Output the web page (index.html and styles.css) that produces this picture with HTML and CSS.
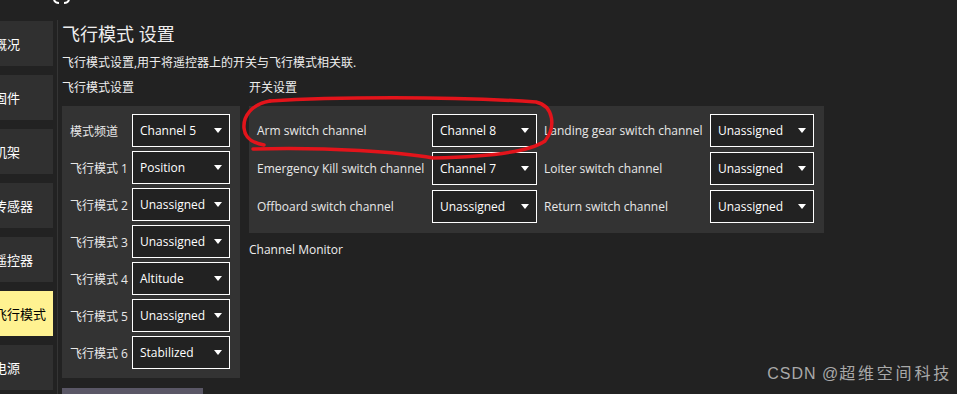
FILE: index.html
```html
<!DOCTYPE html>
<html lang="zh-CN">
<head>
  <meta charset="UTF-8" />
  <title>飞行模式 设置</title>
  <link rel="stylesheet" href="styles.css">
</head>
<body>
  <div class="topbar">
    <svg width="18" height="4" viewBox="0 0 18 4">
      <path d="M1 0 Q2 3 6 3" stroke="#fff" stroke-width="2" fill="none"/>
      <path d="M11 3 Q15 3 16 0" stroke="#fff" stroke-width="2" fill="none"/>
    </svg>
  </div>

  <div class="main">
    <div class="sidebar">
      <div class="sidebtn">概况</div>
      <div class="sidebtn">固件</div>
      <div class="sidebtn">机架</div>
      <div class="sidebtn">传感器</div>
      <div class="sidebtn">遥控器</div>
      <div class="sidebtn active">飞行模式</div>
      <div class="sidebtn">电源</div>
    </div>

    <div class="divider"></div>

    <div class="content">
      <h1 class="page-title">飞行模式 设置</h1>
      <p class="page-desc">飞行模式设置,用于将遥控器上的开关与飞行模式相关联.</p>

      <div class="columns">
        <div class="col-left">
          <div class="col-head">飞行模式设置</div>
          <div class="panel modes">
            <span class="label">模式频道</span>
            <div class="select">Channel 5<i class="arrow"></i></div>
            <span class="label">飞行模式 1</span>
            <div class="select">Position<i class="arrow"></i></div>
            <span class="label">飞行模式 2</span>
            <div class="select">Unassigned<i class="arrow"></i></div>
            <span class="label">飞行模式 3</span>
            <div class="select">Unassigned<i class="arrow"></i></div>
            <span class="label">飞行模式 4</span>
            <div class="select">Altitude<i class="arrow"></i></div>
            <span class="label">飞行模式 5</span>
            <div class="select">Unassigned<i class="arrow"></i></div>
            <span class="label">飞行模式 6</span>
            <div class="select">Stabilized<i class="arrow"></i></div>
          </div>
          <div class="bottom-bar"></div>
        </div>

        <div class="col-right">
          <div class="col-head">开关设置</div>
          <div class="panel switches">
            <span class="label">Arm switch channel</span>
            <div class="select">Channel 8<i class="arrow"></i></div>
            <span class="label">Landing gear switch channel</span>
            <div class="select">Unassigned<i class="arrow"></i></div>

            <span class="label">Emergency Kill switch channel</span>
            <div class="select">Channel 7<i class="arrow"></i></div>
            <span class="label">Loiter switch channel</span>
            <div class="select">Unassigned<i class="arrow"></i></div>

            <span class="label">Offboard switch channel</span>
            <div class="select">Unassigned<i class="arrow"></i></div>
            <span class="label">Return switch channel</span>
            <div class="select">Unassigned<i class="arrow"></i></div>
          </div>
          <div class="monitor-head">Channel Monitor</div>
        </div>
      </div>
    </div>
  </div>

  <!-- 手绘标注 -->
  <svg class="markup" width="957" height="394" viewBox="0 0 957 394">
    <path d="M270 101 C252 104 243 116 244 128 C245 139 253 143 264 145" />
    <path d="M253 149 C330 147 400 152 433 158 C480 157 528 153 545 141 C556 127 554 106 536 102 C450 96 330 97 270 101" />
  </svg>

  <div class="watermark">CSDN @<span class="cjk">超维空间科技</span></div>
</body>
</html>
```

FILE: styles.css
```css
body {
  font-family: "Open Sans", "Noto Sans CJK SC", sans-serif;
  background-color: #222222;
  color: #ffffff;
  margin: 0;
  padding: 0;
  width: 957px;
  height: 394px;
  overflow: hidden;
  position: relative;
}

.topbar {
  height: 20px;
  display: flex;
  align-items: flex-start;
  padding-left: 53px;
}

.main {
  display: flex;
  height: 374px;
}

.sidebar {
  margin-left: -20px;
  width: 73px;
  padding-top: 1px;
  display: flex;
  flex-direction: column;
  gap: 9px;
  flex-shrink: 0;
}

.sidebtn {
  height: 45px;
  background-color: #303030;
  display: flex;
  align-items: center;
  padding-left: 14px;
  font-size: 13px;
  color: #ffffff;
}

.sidebtn.active {
  background-color: #fff291;
  color: #000000;
}

.divider {
  width: 1px;
  background-color: #353535;
  margin: 0 4px;
  flex-shrink: 0;
}

.content {
  flex: 1;
}

.page-title {
  font-size: 18px;
  line-height: 24px;
  font-weight: normal;
  margin: 2px 0 0;
  color: #eeeeee;
}

.page-desc {
  font-size: 12px;
  line-height: 16px;
  margin: 9px 0 0;
  color: #eeeeee;
}

.columns {
  display: flex;
  gap: 9px;
  margin-top: 9px;
  align-items: flex-start;
}

.col-head,
.monitor-head {
  font-size: 12px;
  line-height: 16px;
  color: #eeeeee;
}

.panel {
  background-color: #333333;
  margin-top: 10px;
  display: grid;
  align-items: center;
  font-size: 12px;
}

.modes {
  width: 178px;
  box-sizing: border-box;
  padding: 8px 11px 9px 8px;
  grid-template-columns: 58px 98px;
  column-gap: 4px;
  row-gap: 4px;
}

.switches {
  width: 575px;
  box-sizing: border-box;
  padding: 8px 10px 10px 8px;
  grid-template-columns: 168px 105px 159px 104px;
  column-gap: 7px;
  row-gap: 5px;
}

.label {
  color: #e8e8e8;
  white-space: nowrap;
}

.select {
  height: 33px;
  box-sizing: border-box;
  border: 1px solid #ffffff;
  background-color: #222222;
  display: flex;
  align-items: center;
  padding: 0 7px 0 7px;
  color: #ffffff;
  white-space: nowrap;
}

.arrow {
  margin-left: auto;
  width: 0;
  height: 0;
  border-left: 4px solid transparent;
  border-right: 4px solid transparent;
  border-top: 5px solid #ffffff;
}

.bottom-bar {
  width: 141px;
  height: 20px;
  margin-top: 10px;
  background-color: #5a5766;
}

.monitor-head {
  margin-top: 9px;
}

.markup {
  position: absolute;
  left: 0;
  top: 0;
  pointer-events: none;
}

.markup path {
  fill: none;
  stroke: #e3141b;
  stroke-width: 3.5;
  stroke-linecap: round;
  stroke-linejoin: round;
}

.watermark {
  position: absolute;
  right: 5px;
  top: 362px;
  font-family: "Liberation Sans", "Noto Sans CJK SC", sans-serif;
  font-size: 16px;
  line-height: 24px;
  letter-spacing: 1px;
  color: #a9a9a9;
  white-space: nowrap;
}

.watermark .cjk {
  letter-spacing: 2.8px;
}
```
